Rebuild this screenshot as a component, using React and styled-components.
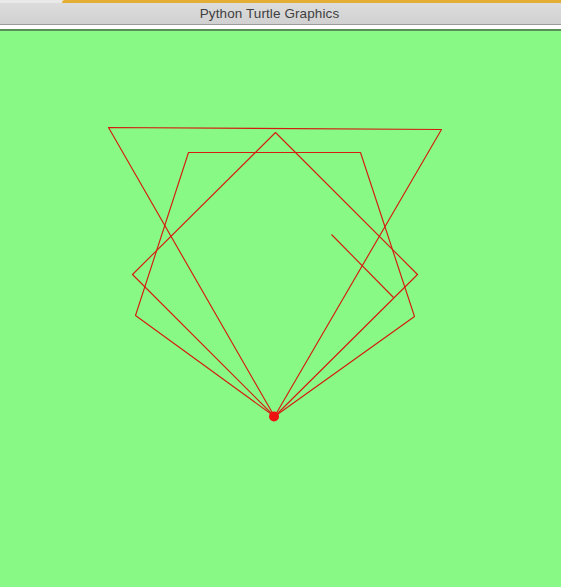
import styled, { createGlobalStyle } from 'styled-components';

const GlobalStyle = createGlobalStyle`
  html, body {
    margin: 0;
    padding: 0;
    background: #ffffff;
  }
`;

const Window = styled.div`
  width: 561px;
  height: 587px;
  display: flex;
  flex-direction: column;
  overflow: hidden;
  background: #ffffff;
`;

// strip of the window behind, peeking above the title bar
const TopStrip = styled.div`
  height: 3px;
  display: flex;
  background: #e9e9e9;
`;

const StripAccent = styled.div`
  margin-left: 62px;
  flex: 1;
  background: #e4ad34;
  border-top-left-radius: 3px;
`;

const TitleBar = styled.div`
  height: 21px;
  display: flex;
  align-items: center;
  justify-content: center;
  padding-right: 22px;
  background: linear-gradient(#dcdcdc, #d1d1d1);
  border-bottom: 1px solid #9b9b9b;
  font-family: "Liberation Sans", Arial, sans-serif;
  font-size: 13.5px;
  color: #404040;
  letter-spacing: 0.1px;
`;

const Spacer = styled.div`
  height: 4px;
  background: #ffffff;
`;

const Canvas = styled.div`
  flex: 1;
  background: #89f986;
  border-top: 2px solid #5b8f58;
  display: flex;
`;

// turtle path: triangle, square, pentagon and the last unfinished stroke
const shapes = [
  [[274, 416], [108, 127], [441, 129], [274, 416]],
  [[274, 416], [132, 274], [275, 132], [417, 274], [274, 416]],
  [[274, 416], [135, 315], [188, 152], [360, 152], [414, 316], [274, 416]],
  [[331, 234], [393, 297]],
];

const Drawing = () => (
  <svg width="561" height="556" viewBox="0 31 561 556">
    <g transform="translate(0.5 0.5)">
      {shapes.map((pts, i) => (
        <polyline
          key={i}
          points={pts.map((p) => p.join(',')).join(' ')}
          fill="none"
          stroke="#d41c10"
          strokeWidth="1.15"
          strokeLinejoin="round"
        />
      ))}
    </g>
    <circle cx="274" cy="416.5" r="5" fill="#ee1111" />
  </svg>
);

const App = () => {
  return (
    <>
      <GlobalStyle />
      <Window>
        <TopStrip>
          <StripAccent />
        </TopStrip>
        <TitleBar>Python Turtle Graphics</TitleBar>
        <Spacer />
        <Canvas>
          <Drawing />
        </Canvas>
      </Window>
    </>
  );
};

export default App;
